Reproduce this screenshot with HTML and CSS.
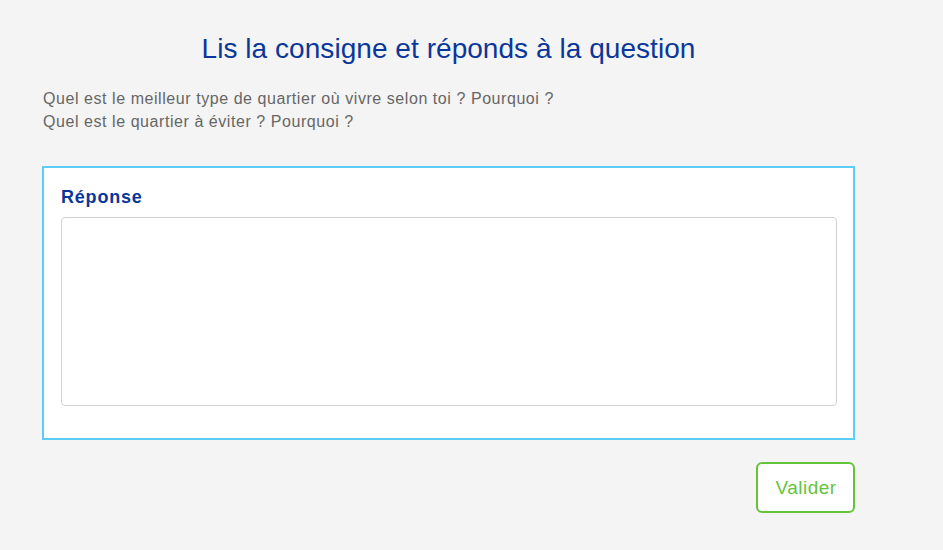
FILE: index.html
```html
<!DOCTYPE html>
<html lang="fr">
<head>
<meta charset="utf-8">
<title>Lis la consigne</title>
<link rel="stylesheet" href="styles.css">
</head>
<body>
<main class="page">
  <h1 class="title">Lis la consigne et réponds à la question</h1>
  <p class="question">Quel est le meilleur type de quartier où vivre selon toi ? Pourquoi ?<br>Quel est le quartier à éviter ? Pourquoi ?</p>
  <section class="answer-box">
    <label class="answer-label" for="reponse">Réponse</label>
    <textarea id="reponse" class="answer-input"></textarea>
  </section>
  <div class="actions">
    <button class="btn-validate" type="button">Valider</button>
  </div>
</main>
</body>
</html>
```

FILE: styles.css
```css
html, body {
  margin: 0;
  padding: 0;
  background: #f4f4f4;
  font-family: "Liberation Sans", Arial, sans-serif;
  height: 100%;
}

.page {
  width: 813px;
  margin-left: 42px;
  padding-top: 33px;
  display: flex;
  flex-direction: column;
}

.title {
  margin: 0;
  font-size: 28px;
  line-height: 32px;
  font-weight: normal;
  letter-spacing: 0.05px;
  color: #0b379b;
  text-align: center;
}

.question {
  margin: 22px 0 0 1px;
  font-size: 16px;
  line-height: 23px;
  letter-spacing: 0.56px;
  color: #666;
}

.answer-box {
  margin-top: 33px;
  background: #fff;
  border: 2px solid #5ccdfa;
  padding: 19px 16px 32px 17px;
  display: flex;
  flex-direction: column;
}

.answer-label {
  font-size: 18px;
  line-height: 20px;
  font-weight: bold;
  letter-spacing: 0.8px;
  color: #0b379b;
  margin-bottom: 10px;
}

.answer-input {
  box-sizing: border-box;
  width: 100%;
  height: 189px;
  border: 1px solid #d2d2d2;
  border-radius: 4px;
  background: #fff;
  resize: none;
  margin: 0;
  font-family: inherit;
  outline: none;
}

.actions {
  display: flex;
  justify-content: flex-end;
  margin-top: 22px;
}

.btn-validate {
  box-sizing: border-box;
  width: 99px;
  height: 51px;
  padding: 0 0 0 1px;
  background: #fff;
  border: 2px solid #63c43a;
  border-radius: 6px;
  color: #63c43a;
  font-family: "Liberation Sans", Arial, sans-serif;
  font-size: 19px;
  letter-spacing: 0.5px;
  cursor: pointer;
}
```
